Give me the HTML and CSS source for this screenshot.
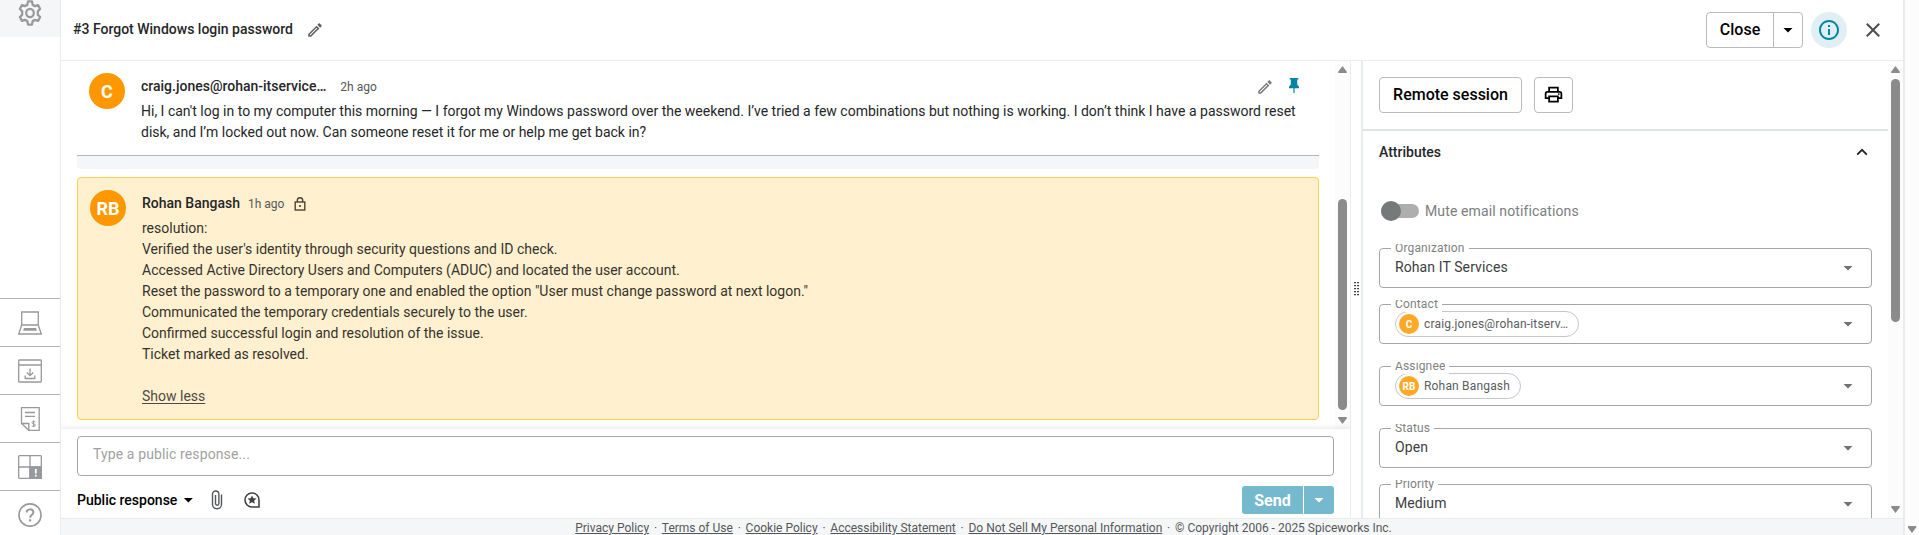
FILE: index.html
```html
<!DOCTYPE html>
<html lang="en">
<head>
<meta charset="utf-8">
<title>#3 Forgot Windows login password</title>
<link rel="stylesheet" href="styles.css">
</head>
<body>
<div class="app">
  <nav class="rail">
    <a class="rail-top"><svg width="24" height="26" viewBox="0 0 24 24" preserveAspectRatio="none" fill="none" stroke="#97999b" stroke-width="2.2" stroke-linejoin="round"><path d="M10 1.3h4l.7 3.2 2.3 1.2 3.1-1 2 3.5-2.3 2.3v3l2.3 2.3-2 3.5-3.1-1-2.3 1.2-.7 3.2h-4l-.7-3.2-2.3-1.2-3.1 1-2-3.5 2.3-2.3v-3L1.900 8.200l2-3.500 3.100 1 2.300-1.200z"/><circle cx="12" cy="12" r="3.800"/></svg></a>
    <a class="rail-item"><svg width="24" height="24" viewBox="0 0 24 24" fill="none" stroke="#97999b" stroke-width="1.300"><path d="M3.700 1h16.600v13H3.700zM3.700 14L.8 23h22.400l-2.900-9"/><path d="M6 17h12l.9 2.800H5.100z" fill="#97999b" stroke="none"/></svg></a>
    <a class="rail-item"><svg width="24" height="24" viewBox="0 0 24 24" fill="none" stroke="#97999b" stroke-width="1.300"><rect x=".7" y="1" width="22.600" height="22" rx=".8"/><path d="M.7 6h22.600M12 9.500v7M8.800 13.500l3.200 3.200 3.200-3.200M7.200 16.500v3h9.600v-3"/></svg></a>
    <a class="rail-item"><svg width="24" height="24" viewBox="0 0 24 24" fill="none" stroke="#97999b" stroke-width="1.300"><path d="M3.500.7h17.700v22.600H10.800l-7.300-6.800zM3.500 16.500h7.300v6.800M7 5.500h10M7 9.300h10"/><path d="M17.300 15c-.5-.8-3.300-.9-3.300.6 0 1.600 3.400.9 3.400 2.500 0 1.500-3 1.500-3.600.5M15.600 13.400v6.700" stroke-width="1"/></svg></a>
    <a class="rail-item"><svg width="24" height="24" viewBox="0 0 24 24" fill="none" stroke="#97999b" stroke-width="1.300"><rect x=".7" y=".7" width="22.600" height="22.600" rx=".8"/><path d="M12 .7v22.600M.7 12h22.600"/><path d="M12 12h11.300v11.300H12z" fill="#97999b"/><path d="M17.800 14v4.500M17.800 19.800v1.700" stroke="#fff" stroke-width="1.800"/></svg></a>
    <a class="rail-item"><svg width="24" height="24" viewBox="0 0 24 24" fill="none" stroke="#97999b" stroke-width="1.600"><circle cx="12" cy="12" r="11.100"/><path d="M8.600 9.600c0-4.300 6.800-4.200 6.800-.3 0 2.500-3.300 2.600-3.300 5.500" stroke-width="2"/><path d="M12.100 16.300v2.200" stroke-width="2.200"/></svg></a>
  </nav>
  <div class="main">
    <header class="head">
      <h1 class="title">#3 Forgot Windows login password</h1>
      <svg class="title-pen" width="18" height="18" viewBox="0 0 24 24" fill="#5b5d5f"><path d="M14.060 9.020l.92.920L5.920 19H5v-.92l9.060-9.060M17.660 3c-.25 0-.51.100-.7.290l-1.830 1.830 3.750 3.750 1.830-1.830c.39-.39.390-1.020 0-1.410l-2.340-2.340c-.2-.2-.45-.29-.71-.29zm-3.600 3.190L3 17.250V21h3.750L17.810 9.940l-3.750-3.750z"/></svg>
      <div class="head-actions">
        <div class="split"><span class="split-label">Close</span><span class="split-caret"><i class="caret"></i></span></div>
        <span class="info"><svg width="24" height="24" viewBox="0 0 24 24" fill="#0684a5"><path d="M11 7h2v2h-2zm0 4h2v6h-2zm1-9C6.480 2 2 6.480 2 12s4.480 10 10 10 10-4.480 10-10S17.520 2 12 2zm0 18c-4.410 0-8-3.590-8-8s3.590-8 8-8 8 3.590 8 8-3.590 8-8 8z"/></svg></span>
        <svg class="x" width="14" height="14" viewBox="0 0 14 14" stroke="#4a4d4f" stroke-width="2"><path d="M.8.8l12.400 12.400M13.200.8L.8 13.200"/></svg>
      </div>
    </header>
    <div class="body">
      <section class="thread-col">
        <div class="thread-wrap">
          <div class="thread">
            <article class="msg">
              <span class="avatar">C</span>
              <div class="msg-body">
                <div class="msg-head"><b class="name">craig.jones@rohan-itservice…</b><span class="ago">2h ago</span>
                  <span class="msg-tools"><svg width="18" height="18" viewBox="0 0 24 24" fill="#77797b"><path d="M14.060 9.020l.92.920L5.920 19H5v-.92l9.060-9.060M17.660 3c-.25 0-.51.100-.7.290l-1.830 1.830 3.750 3.750 1.830-1.830c.39-.39.390-1.020 0-1.410l-2.340-2.340c-.2-.2-.45-.29-.71-.29zm-3.600 3.190L3 17.250V21h3.750L17.810 9.940l-3.750-3.750z"/></svg><svg width="10" height="15" viewBox="0 0 10 15" fill="#0684a5"><path d="M.7 0h8.600v1.600H8.200v5l1.800 2.200v1.400H5.600V15H4.400v-4.800H0V8.800l1.800-2.200v-5H.7z"/></svg></span>
                </div>
                <p class="text">Hi, I can't log in to my computer this morning — I forgot my Windows password over the weekend. I’ve tried a few combinations but nothing is working. I don’t think I have a password reset<br>disk, and I’m locked out now. Can someone reset it for me or help me get back in?</p>
              </div>
            </article>
            <div class="gap-bar"></div>
            <article class="note">
              <span class="avatar">RB</span>
              <div class="msg-body">
                <div class="msg-head"><b class="name">Rohan Bangash</b><span class="ago">1h ago</span><svg class="lock" width="12" height="14" viewBox="0 0 12 14" fill="none" stroke="#4b4536" stroke-width="1.400"><rect x="1.200" y="5" width="9.600" height="8"/><path d="M3.300 5V3.500a2.700 2.700 0 0 1 5.400 0V5"/><circle cx="6" cy="9" r="1.100" fill="#4b4536" stroke="none"/></svg></div>
                <p class="text">resolution:<br>Verified the user's identity through security questions and ID check.<br>Accessed Active Directory Users and Computers (ADUC) and located the user account.<br>Reset the password to a temporary one and enabled the option "User must change password at next logon."<br>Communicated the temporary credentials securely to the user.<br>Confirmed successful login and resolution of the issue.<br>Ticket marked as resolved.<br><br><a class="less">Show less</a></p>
              </div>
            </article>
          </div>
          <div class="scroll"><i class="up"></i><i class="thumb thread-thumb"></i><i class="down"></i></div>
        </div>
        <div class="composer">
          <div class="input">Type a public response...</div>
          <div class="tools">
            <span class="mode">Public response</span><i class="caret"></i>
            <svg class="clip" width="12" height="20" viewBox="0 0 12 20" fill="none" stroke="#55585a" stroke-width="1.400"><path d="M10.500 4.500v9.800a4.500 4.500 0 0 1-9 0V4.200a3.200 3.200 0 0 1 6.400 0v9.300a1.700 1.700 0 0 1-3.400 0V5"/></svg>
            <svg class="star" width="16" height="16" viewBox="0 0 16 16"><path d="M8 1a7 7 0 1 0 0 14h7V8a7 7 0 0 0-7-7z" fill="none" stroke="#3f4244" stroke-width="1.600"/><path d="M8 3.400l1.350 2.900 3.150.25-2.400 2.150.75 3.150L8 10.200l-2.850 1.650.75-3.150-2.400-2.150 3.150-.25z" fill="#3f4244"/></svg>
            <div class="send"><span class="send-label">Send</span><span class="send-caret"><i class="caret caret-white"></i></span></div>
          </div>
        </div>
      </section>
      <div class="gutter"><i class="grip"></i></div>
      <aside class="side">
        <div class="side-content">
          <div class="side-actions"><span class="btn remote">Remote session</span><span class="btn print"><svg width="21" height="21" viewBox="0 0 24 24" fill="#000"><path d="M19 8h-1V3H6v5H5c-1.660 0-3 1.340-3 3v6h4v4h12v-4h4v-6c0-1.660-1.340-3-3-3zM8 5h8v3H8V5zm8 12v2H8v-4h8v2zm2-2v-2H6v2H4v-4c0-.55.450-1 1-1h14c.55 0 1 .450 1 1v4h-2z"/><circle cx="18" cy="11.500" r="1"/></svg></span></div>
          <div class="side-title"><span>Attributes</span><svg width="12" height="8" viewBox="0 0 12 8" fill="none" stroke="#222" stroke-width="1.800"><path d="M1.200 6.700L6 1.800l4.800 4.900"/></svg></div>
          <div class="mute"><span class="switch"><i class="knob"></i></span><span>Mute email notifications</span></div>
          <div class="field"><span class="label">Organization</span><span class="value">Rohan IT Services</span><i class="caret caret-grey"></i></div>
          <div class="field"><span class="label">Contact</span><span class="chip"><b class="dot">C</b>craig.jones@rohan-itserv…</span><i class="caret caret-grey"></i></div>
          <div class="field field-far"><span class="label">Assignee</span><span class="chip"><b class="dot">RB</b>Rohan Bangash</span><i class="caret caret-grey"></i></div>
          <div class="field field-far"><span class="label">Status</span><span class="value">Open</span><i class="caret caret-grey"></i></div>
          <div class="field"><span class="label">Priority</span><span class="value">Medium</span><i class="caret caret-grey"></i></div>
        </div>
        <div class="scroll"><i class="up"></i><i class="thumb side-thumb"></i><i class="down"></i></div>
      </aside>
    </div>
    <footer class="foot"><a>Privacy Policy</a><i>·</i><a>Terms of Use</a><i>·</i><a>Cookie Policy</a><i>·</i><a>Accessibility Statement</a><i>·</i><a>Do Not Sell My Personal Information</a><i>·</i><span>© Copyright 2006 - 2025 Spiceworks Inc.</span></footer>
  </div>
  <div class="page-scroll"><i class="down"></i></div>
</div>
</body>
</html>
```
FILE: styles.css
```css
* { box-sizing: border-box; }
html, body { margin: 0; height: 100%; overflow: hidden; }
body { font: 14px/21px Roboto, sans-serif; color: #252628; background: #fff; }
svg { display: block; flex: none; }
i { font-style: normal; }
.app { display: flex; height: 535px; }

.rail { width: 61px; flex: none; display: flex; flex-direction: column; justify-content: space-between; border-right: 1px solid #e8ecec; height: 538px; }
.rail-top { height: 37px; background: #f5f6f8; margin-bottom: auto; display: flex; justify-content: center; align-items: flex-start; }
.rail-item { height: 48px; flex: none; border-top: 1px solid #b3b5b6; display: flex; align-items: center; justify-content: center; }

.main { flex: 1; display: flex; flex-direction: column; min-width: 0; }
.head { height: 61px; flex: none; display: flex; align-items: center; border-bottom: 1px solid #e8ecec; padding: 0 23px 0 12px; }
.title { font-size: 14px; font-weight: 500; margin: 0; line-height: 21px; padding-bottom: 1px; }
.title-pen { margin-left: 13px; }
.head-actions { margin-left: auto; display: flex; align-items: center; }
.split { display: flex; width: 97px; height: 36px; border: 1px solid #b9bbbc; border-radius: 4px; color: #000; font-size: 16px; font-weight: 500; }
.split-label { width: 67px; display: flex; align-items: center; justify-content: center; padding-bottom: 1px; border-right: 1px solid #b9bbbc; }
.split-caret { flex: 1; display: flex; align-items: center; justify-content: center; }
.caret { width: 10px; height: 5px; background: #000; clip-path: polygon(0 0, 100% 0, 50% 100%); flex: none; }
.caret-white { background: #fff; }
.caret-grey { background: #6f7173; margin-left: auto; }
.info { width: 36px; height: 36px; border-radius: 50%; background: #e0eff4; display: flex; align-items: center; justify-content: center; margin: 0 19px 0 8px; }

.body { height: 457px; flex: none; display: flex; }
.thread-col { width: 1290px; display: flex; flex-direction: column; border-right: 1px solid #e8ecec; flex: none; }
.thread-wrap { display: flex; height: 368px; }
.thread { width: 1274px; padding: 12px 16px 0; }
.msg { display: flex; height: 83px; padding: 0 12px; border-bottom: 1px solid #b0b5b5; }
.avatar { width: 36px; height: 36px; border-radius: 50%; background: #ff9800; color: #fff; font-weight: 700; font-size: 18px; display: flex; align-items: center; justify-content: center; flex: none; }
.msg-body { margin-left: 16px; flex: 1; min-width: 0; }
.msg-head { display: flex; align-items: center; height: 25px; padding-top: 2px; }
.name { font-weight: 500; }
.ago { font-size: 12px; color: #55585a; margin-left: 14px; padding-top: 1px; }
.note .ago { margin-left: 8px; }
.lock { margin-left: 10px; }
.msg-tools { margin-left: auto; display: flex; gap: 15px; margin-right: 8px; padding-top: 1px; }
.text { margin: 3px 0 0; white-space: nowrap; }
.gap-bar { height: 13px; background: #f5f6f8; border-radius: 0 0 4px 4px; margin-bottom: 8px; }
.note { height: 243px; border: 1px solid #fdd14d; border-radius: 4px; background: #fff0cf; display: flex; padding: 12px; }
.note .text { color: #36332c; }
.less { color: #4e4b45; text-decoration: underline; text-underline-offset: 2px; }
.scroll { width: 15px; background: #fcfcfc; display: flex; flex-direction: column; align-items: center; padding: 5px 0 5px; }
.up, .down { width: 9px; height: 7px; background: #8b8b8b; clip-path: polygon(50% 0, 100% 85%, 95% 100%, 5% 100%, 0 85%); flex: none; }
.down { clip-path: polygon(50% 100%, 100% 15%, 95% 0, 5% 0, 0 15%); margin-top: auto; }
.thumb { width: 9px; border-radius: 5px; background: #8b8b8b; flex: none; }
.thread-thumb { height: 211px; margin-top: 126px; }
.side-thumb { height: 243px; margin-top: 6px; }

.composer { flex: 1; padding: 7px 16px 0; background: #fff; box-shadow: 0 -2px 5px rgba(0, 0, 0, .08); clip-path: inset(-6px 0 0 0); }
.input { height: 40px; border: 1px solid #a4a7a8; border-radius: 4px; padding: 7px 15px; color: #9fa1a3; letter-spacing: .12px; }
.tools { display: flex; align-items: center; height: 28px; margin-top: 10px; }
.mode { color: #000; font-weight: 500; margin-right: 6px; }
.clip { margin-left: 18px; }
.star { margin-left: 21px; }
.send { margin-left: auto; width: 92px; height: 28px; border-radius: 3px; background: #75b9cf; color: #fff; font-weight: 700; font-size: 16px; display: flex; overflow: hidden; }
.send-label { width: 62px; border-right: 1px solid #fff; display: flex; align-items: center; justify-content: center; }
.send-caret { flex: 1; display: flex; align-items: center; justify-content: center; }

.gutter { width: 12px; border-right: 2px solid #e8ecec; display: flex; align-items: center; justify-content: center; padding-bottom: 2px; }
.grip { width: 5px; height: 14px; background: repeating-linear-gradient(90deg, #fff0 0 2px, #fff 2px 3px), repeating-linear-gradient(#444 0 1px, #ccc 1px 2px, #fff 2px 3px); }
.side { flex: 1; display: flex; overflow: hidden; }
.side-content { width: 525px; height: 457px; overflow: hidden; }
.side-actions { height: 70px; padding: 16px 16px 0; display: flex; gap: 12px; border-bottom: 2px solid #e0e3e3; }
.btn { height: 36px; border: 1px solid #b9bbbc; border-radius: 4px; color: #000; font-size: 16px; font-weight: 500; display: flex; align-items: center; justify-content: center; padding-bottom: 2px; }
.remote { width: 143px; }
.print { width: 39px; padding-right: 1px; }
.side-title { height: 42px; padding: 0 20px 0 16px; display: flex; align-items: center; justify-content: space-between; font-weight: 500; }
.mute { display: flex; align-items: center; margin: 27px 0 0 18px; height: 22px; color: #7c7e80; letter-spacing: .12px; }
.switch { width: 38px; height: 14px; border-radius: 7px; background: #adafaf; margin-right: 6px; display: flex; align-items: center; }
.knob { width: 20px; height: 20px; border-radius: 50%; background: #757979; flex: none; }
.field { position: relative; height: 40px; margin: 16px 16px 0; border: 1px solid #a4a7a8; border-radius: 4px; display: flex; align-items: center; padding: 0 18px 0 15px; }
.mute + .field { margin-top: 26px; }
.field-far { margin-top: 22px; }
.label { position: absolute; left: 11px; top: -5px; height: 12px; padding: 0 4px; overflow: hidden; background: #fff; color: #7f8183; font-size: 12px; line-height: 9px; letter-spacing: .15px; }
.value { color: #3c3e40; padding-bottom: 1px; letter-spacing: .1px; }
.chip { height: 26px; border: 1px solid #c4c6c7; border-radius: 13px; display: flex; align-items: center; padding: 0 10px 0 3px; color: #5b5d5f; font-size: 12px; letter-spacing: .18px; }
.dot { width: 20px; height: 20px; border-radius: 50%; background: #ffa726; color: #fff; font-size: 10px; font-weight: 700; display: flex; align-items: center; justify-content: center; margin-right: 5px; letter-spacing: 0; }

.foot { height: 17px; background: #f5f6f8; border-top: 1px solid #e8ecec; display: flex; justify-content: center; padding-left: 3px; font-size: 12px; line-height: 18px; color: #55585a; }
.foot a { text-decoration: underline; }
.foot i { padding: 0 4.800px; }
.page-scroll { width: 16px; flex: none; border-left: 2px solid #e8ecec; background: #fcfcfc; display: flex; align-items: flex-end; justify-content: center; padding-bottom: 2px; }
```
